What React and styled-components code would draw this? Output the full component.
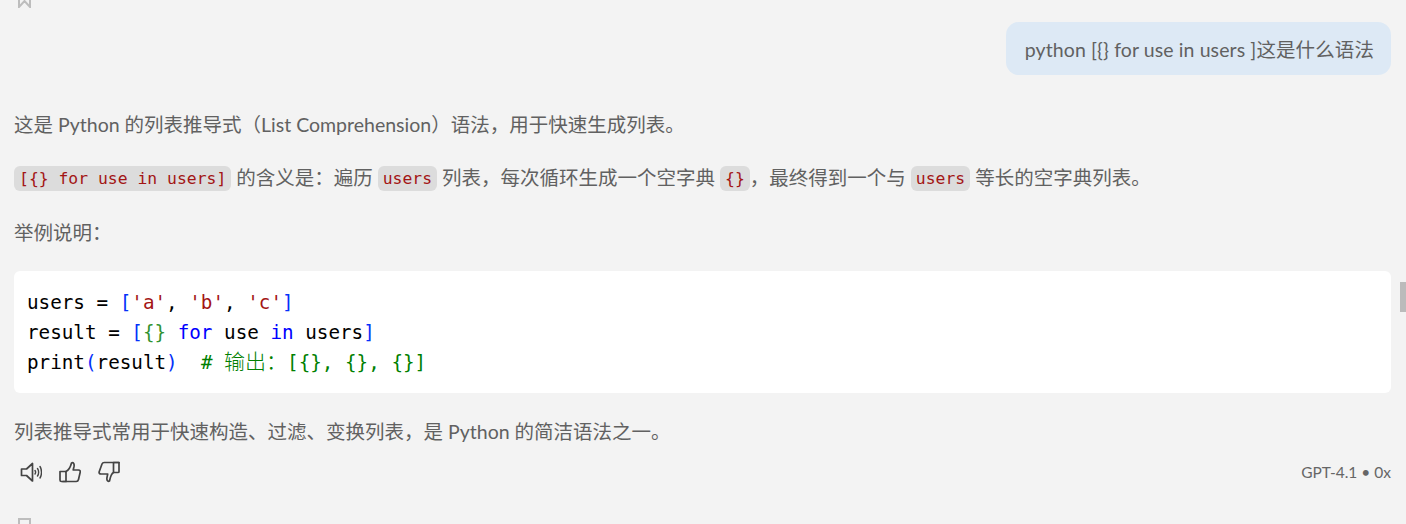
import React from "react";
import styled, { createGlobalStyle } from "styled-components";

const Global = createGlobalStyle`
  html, body { margin: 0; padding: 0; background: #f3f3f3; }
`;

const sans = `"Lato", "Noto Sans CJK SC", sans-serif`;
const mono = `"DejaVu Sans Mono", "Noto Sans CJK SC", monospace`;

const Page = styled.div`
  position: relative;
  width: 1406px;
  height: 524px;
  overflow: hidden;
  background: #f3f3f3;
  color: #616161;
  font-family: ${sans};
  font-size: 19.5px;
`;
const Thread = styled.div`
  display: flex;
  flex-direction: column;
  padding: 0 15px 0 14px;
`;
const ClippedTop = styled.div`
  height: 8px;
  display: flex;
  align-items: flex-end;
  padding-left: 4px;
`;
const UserRow = styled.div`
  display: flex;
  justify-content: flex-end;
  margin-top: 14px;
`;
const Bubble = styled.div`
  height: 53px;
  box-sizing: border-box;
  padding: 0 17px 1px 19px;
  display: flex;
  align-items: center;
  background: #dde9f5;
  border-radius: 13px;
  white-space: pre;
  letter-spacing: 0.1px;
`;
const Paragraph = styled.p`
  margin: ${p => p.$top}px 0 0;
  height: 30px;
  line-height: 30px;
  white-space: pre;
`;
const InlineCode = styled.code`
  display: inline-block;
  height: 25px;
  line-height: 26px;
  padding: 0 5px;
  position: relative;
  top: -1px;
  background: #dcdcdc;
  border-radius: 6px;
  color: #a31515;
  font-family: ${mono};
  font-size: 16.4px;
`;
const CodeBlock = styled.pre`
  margin: 23px 0 0;
  height: 122px;
  box-sizing: border-box;
  padding: 17px 13px;
  background: #fff;
  border-radius: 6px;
  color: #000;
  font-family: ${mono};
  font-size: 19.25px;
  line-height: 30px;
`;
const Token = styled.span`
  color: ${p => p.$c};
`;
const CommentCjk = styled.span`
  font-size: 21px;
  font-weight: 300;
  line-height: 0;
`;
const Actions = styled.div`
  display: flex;
  align-items: center;
  justify-content: space-between;
  margin-top: 9px;
  height: 32px;
`;
const IconGroup = styled.div`
  display: flex;
  align-items: center;
  gap: 17px;
  padding-left: 6px;
`;
const IconButton = styled.svg`
  width: 22px;
  height: 22px;
  fill: none;
  stroke: #444;
  stroke-width: 1.7;
  stroke-linejoin: round;
  stroke-linecap: round;
`;
const ModelLabel = styled.span`
  font-size: 15.5px;
  color: #666;
`;
const ClippedBottom = styled.div`
  margin-top: 30px;
  padding-left: 4px;
`;
const Bookmark = styled.svg`
  display: block;
  flex: none;
  width: 15px;
  height: 18px;
  fill: none;
  stroke: #bdbdbd;
  stroke-width: 2;
`;
const Thumb = styled.div`
  position: absolute;
  right: 0;
  top: 282px;
  width: 6px;
  height: 30px;
  background: #bbb;
`;

const BLUE = "#0431fa";
const KEY = "#0000ff";
const STR = "#a31515";
const GRN = "#319331";
const CMT = "#008000";

export default function App() {
  return (
    <Page>
      <Global />
      <Thread>
        <ClippedTop>
          <Bookmark viewBox="0 0 15 18">
            <path d="M1 0V17L6.5 11L12 17V0" />
          </Bookmark>
        </ClippedTop>
        <UserRow>
          <Bubble>python [{"{}"} for use in users ]这是什么语法</Bubble>
        </UserRow>
        <Paragraph $top={35}>这是 Python 的列表推导式（List Comprehension）语法，用于快速生成列表。</Paragraph>
        <Paragraph $top={23}>
          <InlineCode>[{"{}"} for use in users]</InlineCode> 的含义是：遍历 <InlineCode>users</InlineCode> 列表，每次循环生成一个空字典 <InlineCode>{"{}"}</InlineCode>，最终得到一个与 <InlineCode>users</InlineCode> 等长的空字典列表。
        </Paragraph>
        <Paragraph $top={25}>举例说明：</Paragraph>
        <CodeBlock>
          users = <Token $c={BLUE}>[</Token><Token $c={STR}>'a'</Token>, <Token $c={STR}>'b'</Token>, <Token $c={STR}>'c'</Token><Token $c={BLUE}>]</Token>{"\n"}
          result = <Token $c={BLUE}>[</Token><Token $c={GRN}>{"{}"}</Token> <Token $c={KEY}>for</Token> use <Token $c={KEY}>in</Token> users<Token $c={BLUE}>]</Token>{"\n"}
          print<Token $c={BLUE}>(</Token>result<Token $c={BLUE}>)</Token>  <Token $c={CMT}># <CommentCjk>输出：</CommentCjk>[{"{}"}, {"{}"}, {"{}"}]</Token>
        </CodeBlock>
        <Paragraph $top={24}>列表推导式常用于快速构造、过滤、变换列表，是 Python 的简洁语法之一。</Paragraph>
        <Actions>
          <IconGroup>
            <IconButton viewBox="0 0 22 22">
              <path d="M1.5 8H6.5L12.5 2.5V20L6.5 14.5H1.5Z" />
              <path d="M15 9.5C15.7 10.5 15.7 12 15 13M17.5 7.5C19 9.5 19 13 17.5 15M20 5.5C22 8.5 22 14 20 17" strokeWidth="1.4" />
            </IconButton>
            <IconButton viewBox="0 0 22 22">
              <path d="M1 10.5H7V20.5H2.5A1.5 1.5 0 0 1 1 19Z" />
              <path d="M7 10.5C9 9.5 11.5 6 12.5 2C14.5 1 15.5 3 15 5.5L14.2 9H19.5C21 9 21.5 10 21.2 11.2L19.5 18.5C19.2 19.8 18.5 20.5 17.2 20.5H4" />
            </IconButton>
            <IconButton viewBox="0 0 22 22">
              <path d="M15.5 1.5H21V10.8C21 11.4 20.6 11.5 20 11.5H15.5Z" />
              <path d="M15.5 11.5C13.5 12.5 12.5 15 11.5 20C9.5 21 8.5 19 9 16.5L9.7 13H3C1.6 13 .8 12 1.2 10.8L4 3C4.4 2 5 1.5 6.2 1.5H21" />
            </IconButton>
          </IconGroup>
          <ModelLabel>GPT-4.1 • 0x</ModelLabel>
        </Actions>
        <ClippedBottom>
          <Bookmark viewBox="0 0 15 18">
            <path d="M1 1H12V18H1Z" />
          </Bookmark>
        </ClippedBottom>
      </Thread>
      <Thumb />
    </Page>
  );
}
